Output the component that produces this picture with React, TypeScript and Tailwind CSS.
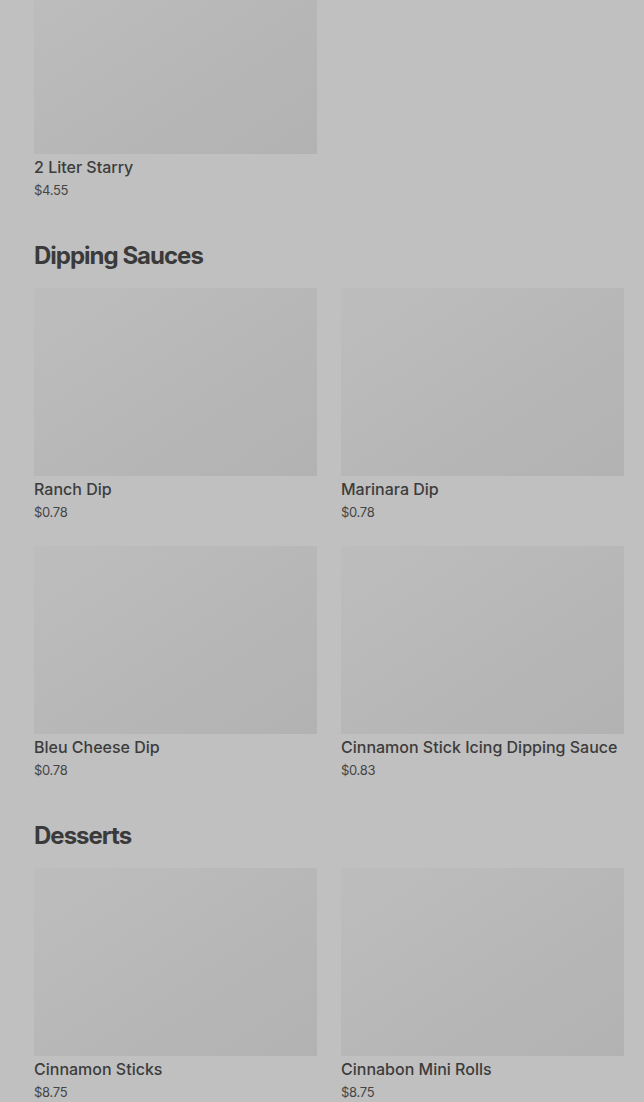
const sections = [
  {
    title: null,
    items: [{ name: "2 Liter Starry", price: "$4.55" }],
  },
  {
    title: "Dipping Sauces",
    items: [
      { name: "Ranch Dip", price: "$0.78" },
      { name: "Marinara Dip", price: "$0.78" },
      { name: "Bleu Cheese Dip", price: "$0.78" },
      { name: "Cinnamon Stick Icing Dipping Sauce", price: "$0.83" },
    ],
  },
  {
    title: "Desserts",
    items: [
      { name: "Cinnamon Sticks", price: "$8.75" },
      { name: "Cinnabon Mini Rolls", price: "$8.75" },
    ],
  },
];

export default function App() {
  return (
    <div
      className="min-h-screen bg-[#c0c0c0] pl-[34px] pr-[20px] overflow-hidden"
      style={{ fontFamily: "Inter, 'Liberation Sans', sans-serif" }}
    >
      <div className="-mt-[34px] flex flex-col gap-10">
        {sections.map((section, i) => (
          <section key={i}>
            {section.title && (
              <h2 className="text-2xl leading-8 font-bold text-[#3a3a3a] tracking-[-1px] mb-4">
                {section.title}
              </h2>
            )}
            <div className="grid grid-cols-2 gap-x-6 gap-y-6">
              {section.items.map((item) => (
                <div key={item.name}>
                  {/* placeholder image */}
                  <div className="h-[188px] bg-linear-to-br from-[#bdbdbd] to-[#b2b2b2]" />
                  <div className="mt-[1px] text-base leading-6 font-medium text-[#3c3c3c]">
                    {item.name}
                  </div>
                  <div className="mt-[1px] text-[13px] leading-5 tracking-[-0.3px] text-[#454545]">
                    {item.price}
                  </div>
                </div>
              ))}
            </div>
          </section>
        ))}
      </div>
    </div>
  );
}
